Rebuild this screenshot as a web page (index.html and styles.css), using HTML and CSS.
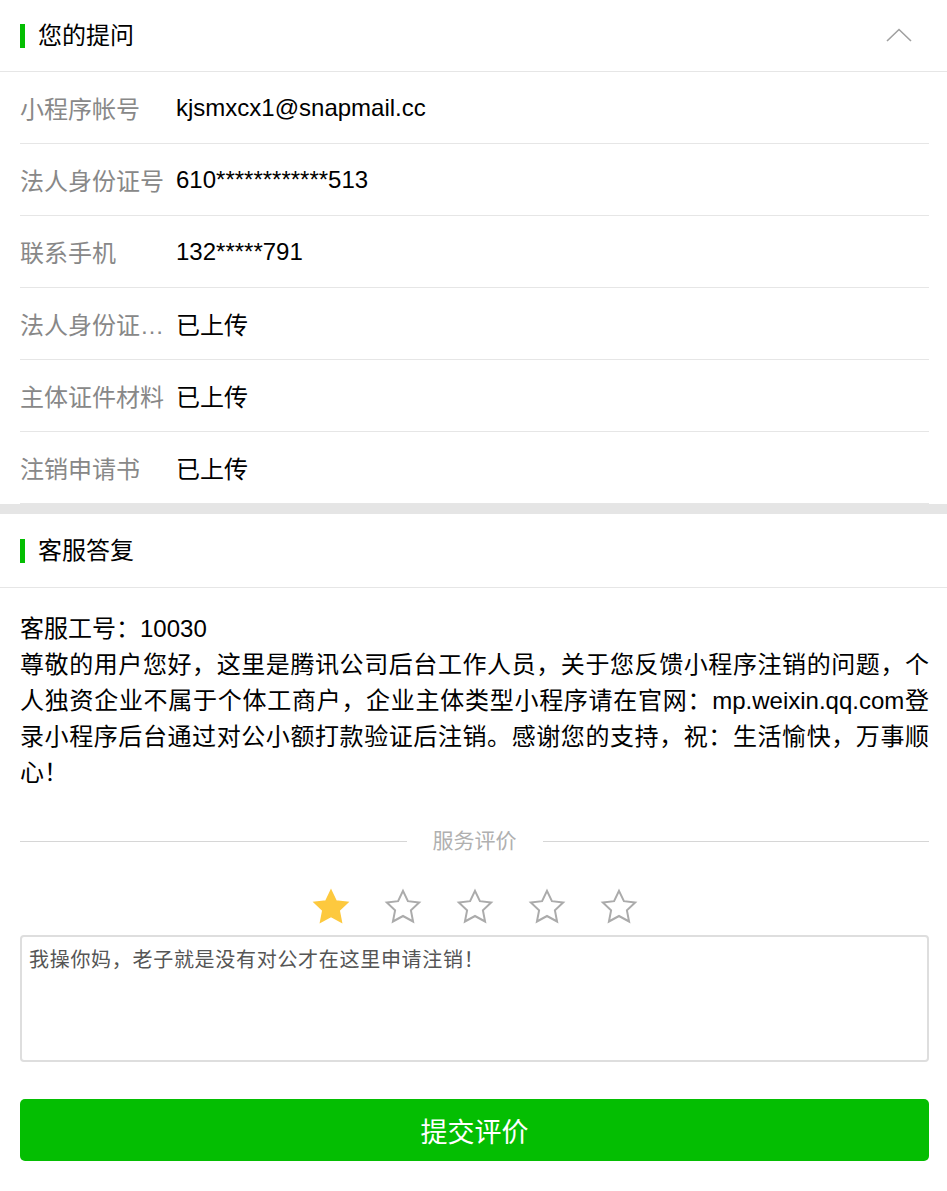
FILE: index.html
```html
<!DOCTYPE html>
<html lang="zh-CN">
<head>
    <meta charset="UTF-8">
    <meta name="viewport" content="width=device-width, initial-scale=1.0">
    <title>反馈详情</title>
    <link rel="stylesheet" href="styles.css">
</head>
<body>
    <!-- 提问 -->
    <section class="panel">
        <div class="panel-head">
            <h2 class="panel-title">您的提问</h2>
            <svg class="chevron" width="26" height="14" viewBox="0 0 26 14">
                <polyline points="1,13 13,1.5 25,13" fill="none" stroke="#a0a0a0" stroke-width="1.6"/>
            </svg>
        </div>
        <ul class="info-list">
            <li class="info-row">
                <span class="info-label">小程序帐号</span>
                <span class="info-value">kjsmxcx1@snapmail.cc</span>
            </li>
            <li class="info-row">
                <span class="info-label">法人身份证号</span>
                <span class="info-value">610************513</span>
            </li>
            <li class="info-row">
                <span class="info-label">联系手机</span>
                <span class="info-value">132*****791</span>
            </li>
            <li class="info-row">
                <span class="info-label">法人身份证照片</span>
                <span class="info-value">已上传</span>
            </li>
            <li class="info-row">
                <span class="info-label">主体证件材料</span>
                <span class="info-value">已上传</span>
            </li>
            <li class="info-row">
                <span class="info-label">注销申请书</span>
                <span class="info-value">已上传</span>
            </li>
        </ul>
    </section>

    <div class="spacer"></div>

    <!-- 答复 -->
    <section class="panel">
        <div class="panel-head panel-head--reply">
            <h2 class="panel-title">客服答复</h2>
        </div>
        <div class="reply">
            <p class="reply-text">客服工号：10030<br>尊敬的用户您好，这里是腾讯公司后台工作人员，关于您反馈小程序注销的问题，个人独资企业不属于个体工商户，企业主体类型小程序请在官网：mp.weixin.qq.com登录小程序后台通过对公小额打款验证后注销。感谢您的支持，祝：生活愉快，万事顺心！</p>

            <div class="rate-divider"><span>服务评价</span></div>

            <div class="stars">
                <svg class="star on" viewBox="0 0 24 24"><path d="M12 2.3l2.95 6.2 6.75.85-4.95 4.65 1.3 6.7L12 17.4l-6.05 3.3 1.3-6.7L2.3 9.35l6.75-.85z"/></svg>
                <svg class="star" viewBox="0 0 24 24"><path d="M12 2.3l2.95 6.2 6.75.85-4.95 4.65 1.3 6.7L12 17.4l-6.05 3.3 1.3-6.7L2.3 9.35l6.75-.85z"/></svg>
                <svg class="star" viewBox="0 0 24 24"><path d="M12 2.3l2.95 6.2 6.75.85-4.95 4.65 1.3 6.7L12 17.4l-6.05 3.3 1.3-6.7L2.3 9.35l6.75-.85z"/></svg>
                <svg class="star" viewBox="0 0 24 24"><path d="M12 2.3l2.95 6.2 6.75.85-4.95 4.65 1.3 6.7L12 17.4l-6.05 3.3 1.3-6.7L2.3 9.35l6.75-.85z"/></svg>
                <svg class="star" viewBox="0 0 24 24"><path d="M12 2.3l2.95 6.2 6.75.85-4.95 4.65 1.3 6.7L12 17.4l-6.05 3.3 1.3-6.7L2.3 9.35l6.75-.85z"/></svg>
            </div>

            <textarea class="comment" id="comment">我操你妈，老子就是没有对公才在这里申请注销！</textarea>

            <button type="button" class="submit-btn">提交评价</button>
        </div>
    </section>
</body>
</html>
```

FILE: styles.css
```css
/* General */
body {
    margin: 0;
    padding: 0;
    background-color: #fff;
    font-family: 'Liberation Sans', 'Noto Sans CJK SC', sans-serif;
    color: #000;
}

.panel {
    background-color: #fff;
}

.panel-head {
    display: flex;
    align-items: center;
    justify-content: space-between;
    height: 71px;
    padding: 0 35px 0 20px;
    border-bottom: 1px solid #e6e6e6;
}

.panel-head--reply {
    height: 73px;
}

.panel-title {
    margin: 0;
    font-size: 24px;
    font-weight: normal;
    line-height: 24px;
    padding-left: 13px;
    border-left: 5px solid #04be02;
}

.chevron {
    display: block;
    margin-top: -2px;
}

/* Question info */
.info-list {
    list-style: none;
    margin: 0;
    padding: 0 18px 0 20px;
}

.info-row {
    display: flex;
    align-items: center;
    height: 71px;
    border-bottom: 1px solid #e6e6e6;
    font-size: 24px;
}

.info-label {
    flex: 0 0 156px;
    color: #888;
    white-space: nowrap;
    overflow: hidden;
    text-overflow: ellipsis;
}

.info-value {
    color: #000;
}

.spacer {
    height: 10px;
    background-color: #e5e5e5;
}

/* Reply */
.reply {
    padding: 23px 18px 0 20px;
}

.reply-text {
    margin: 0;
    font-size: 24px;
    line-height: 36px;
    text-align: justify;
}

.rate-divider {
    display: flex;
    align-items: center;
    margin-top: 35px;
    color: #b0b0b0;
    font-size: 21px;
    line-height: 30px;
}

.rate-divider::before,
.rate-divider::after {
    content: '';
    flex: 1;
    height: 1px;
    background-color: #d6d6d6;
}

.rate-divider span {
    padding: 0 26px;
}

.stars {
    display: flex;
    justify-content: center;
    gap: 32px;
    margin-top: 31px;
}

.star {
    width: 40px;
    height: 40px;
    display: block;
}

.star path {
    fill: none;
    stroke: #ababab;
    stroke-width: 1.2;
    stroke-linejoin: miter;
}

.star.on path {
    fill: #fdc93e;
    stroke: #fdc93e;
}

.comment {
    display: block;
    width: 100%;
    height: 127px;
    margin-top: 8px;
    padding: 10px 7px;
    box-sizing: border-box;
    border: 2px solid #dedede;
    border-radius: 4px;
    font-family: 'Liberation Serif', 'Noto Sans CJK SC', serif;
    font-size: 20px;
    letter-spacing: 0.7px;
    line-height: 26px;
    color: #555;
    resize: none;
    outline: none;
}

.submit-btn {
    display: block;
    width: 100%;
    height: 62px;
    margin-top: 37px;
    border: none;
    border-radius: 5px;
    background-color: #04be02;
    color: #fff;
    font-family: inherit;
    font-size: 27px;
    cursor: pointer;
}
```
